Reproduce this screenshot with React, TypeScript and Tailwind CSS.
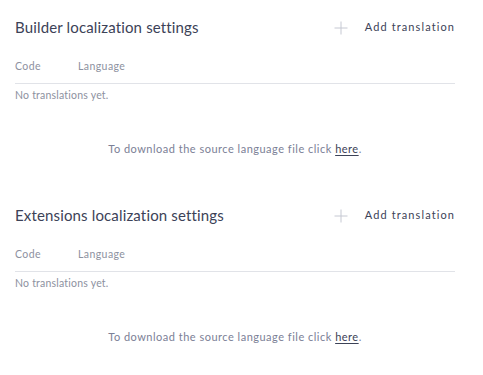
import React from "react";

function PlusIcon() {
  return (
    <svg width="14" height="14" viewBox="0 0 14 14" className="mt-[2px] text-[#c5c8d2]">
      <path d="M7 0.5V13.5M0.5 7H13.5" stroke="currentColor" strokeWidth="1" fill="none" />
    </svg>
  );
}

function LocalizationSection({ title }: { title: string }) {
  return (
    <div className="h-[188px] pt-[17px]">
      <div className="flex items-center justify-between h-5">
        <h2 className="text-[15px] leading-5 tracking-[0.01em] text-[#3c4257]">{title}</h2>
        <button className="flex items-center gap-[17px] text-[11px] tracking-[0.1em] text-[#3c4257]">
          <PlusIcon />
          <span>Add translation</span>
        </button>
      </div>
      <div className="mt-[22px] flex h-[25px] items-start border-b border-[#e1e3e8] text-[10.5px] leading-[14px] tracking-[0.04em] text-[#8d91a0]">
        <div className="w-[63px]">Code</div>
        <div>Language</div>
      </div>
      <div className="mt-[4px] text-[10.5px] leading-[14px] tracking-[0.02em] text-[#8d91a0]">
        No translations yet.
      </div>
      <div className="mt-[40px] text-center text-[11px] leading-[14px] tracking-[0.045em] text-[#7b8096]">
        To download the source language file click{" "}
        <a href="#" className="text-[#3c4257] underline underline-offset-2 decoration-[#3c4257]">
          here
        </a>
        .
      </div>
    </div>
  );
}

export default function App() {
  return (
    <div className="w-[483px] h-[375px] bg-white px-[15px] font-['Lato',sans-serif]">
      <div className="w-[440px]">
        <LocalizationSection title="Builder localization settings" />
        <LocalizationSection title="Extensions localization settings" />
      </div>
    </div>
  );
}
